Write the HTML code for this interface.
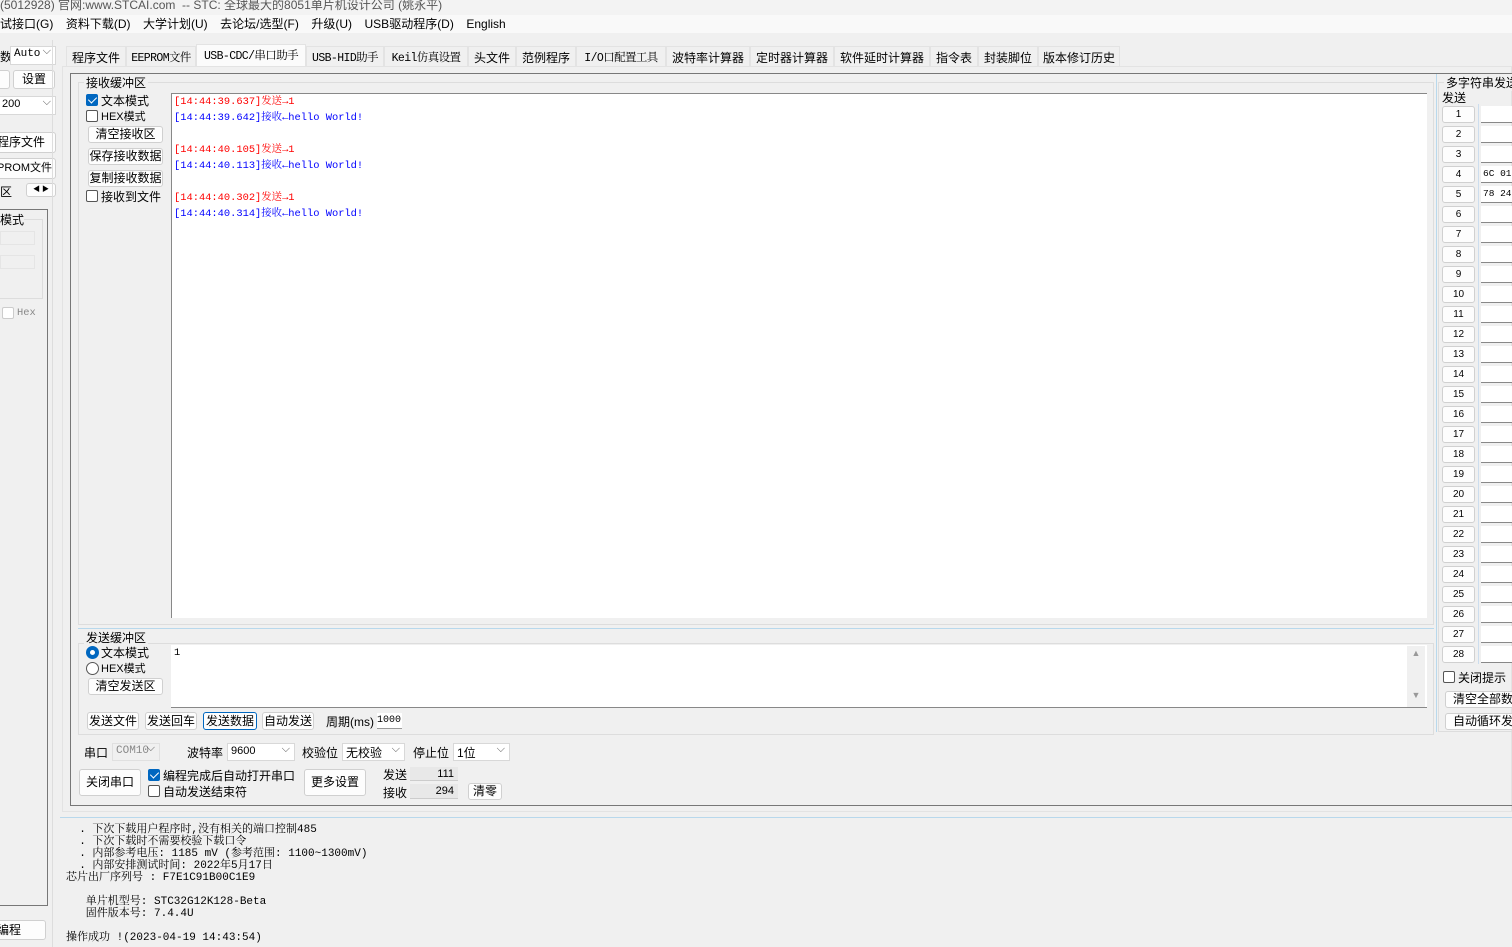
<!DOCTYPE html><html><head><meta charset="utf-8"><style>
*{box-sizing:border-box;margin:0;padding:0}
body{width:1512px;height:947px;background:#f0f0f0;font-family:"Liberation Sans","Noto Sans CJK SC",sans-serif;font-size:12px;color:#000;position:relative;overflow:hidden}
.a{position:absolute;white-space:nowrap}
.btn{position:absolute;background:#fdfdfd;border:1px solid #d0d0d0;border-radius:3px;text-align:center;white-space:nowrap}
.mono{font-family:"Liberation Mono","Noto Serif CJK SC",monospace;font-size:10.4px}
.cb{position:absolute;width:12px;height:12px;border:1px solid #555;border-radius:2px;background:#fff}
.cb.on{background:#0067c0;border-color:#0067c0}
.cb.on:after{content:"";position:absolute;left:3px;top:0px;width:4px;height:7px;border:solid #fff;border-width:0 1.5px 1.5px 0;transform:rotate(45deg)}
.rd{position:absolute;width:13px;height:13px;border:1px solid #555;border-radius:50%;background:#fff}
.rd.on{border:4px solid #0067c0}
.sel{position:absolute;background:#fff;border:1px solid #d8d8d8;height:18px;font-size:11px;padding:1px 3px}
.sel:after{content:"⌵";position:absolute;right:4px;top:-1px;color:#555;font-size:11px}
.tab{position:absolute;top:46px;height:21px;background:#f0f0f0;border:1px solid #e3e3e3;border-bottom:none;padding-top:2px;font-size:12px;text-align:center;overflow:hidden;white-space:nowrap}
.tab.m{font-family:"Liberation Mono","Noto Serif CJK SC",monospace;font-size:11.5px;padding-top:2px;letter-spacing:-0.6px}
.n{position:absolute;left:1442px;width:33px;height:17px;background:#fdfdfd;border:1px solid #d0d0d0;border-radius:3px;text-align:center;font-size:10px;line-height:15px;font-family:"Liberation Sans",sans-serif}
.in{position:absolute;left:1481px;width:31px;height:17px;background:#fff;border-bottom:1px solid #888;font-size:9.5px;line-height:15px;padding-left:2px;font-family:"Liberation Mono",monospace;overflow:hidden;white-space:nowrap}
</style></head><body>
<div class="a" style="left:0;top:0;width:1512px;height:15px;background:#f3f3f3;color:#555;font-size:12px;line-height:10px;">(5012928) 官网:www.STCAI.com &nbsp;-- STC: 全球最大的8051单片机设计公司 (姚永平)</div>
<div class="a" style="left:0;top:15px;width:1512px;height:18px;background:#f9f9f9;font-size:12px;line-height:18px">
<span>试接口(G)</span><span style="margin-left:12.5px">资料下载(D)</span><span style="margin-left:12.5px">大学计划(U)</span><span style="margin-left:12.5px">去论坛/选型(F)</span><span style="margin-left:12.5px">升级(U)</span><span style="margin-left:12.5px">USB驱动程序(D)</span><span style="margin-left:12.5px">English</span></div>
<!-- left panel -->
<div class="a" style="left:0;top:48px">数</div>
<div class="sel mono" style="left:10px;top:46px;width:46px;height:19px">Auto</div>
<div class="btn" style="left:-4px;top:70px;width:14px;height:19px"></div>
<div class="btn" style="left:13px;top:70px;width:42px;height:19px;line-height:17px">设置</div>
<div class="sel" style="left:-2px;top:96px;width:58px;height:19px">200</div>
<div class="btn" style="left:-4px;top:132px;width:60px;height:21px;text-align:left;line-height:19px">程序文件</div>
<div class="btn" style="left:-4px;top:158px;width:60px;height:21px;text-align:left;line-height:19px;font-size:11px">PROM文件</div>
<div class="a" style="left:0;top:183px">区</div>
<div class="btn" style="left:26px;top:183px;width:30px;height:14px;font-size:7px;line-height:12px">◀ ▶</div>
<div class="a" style="left:-2px;top:209px;width:50px;height:697px;border:1px solid #777;border-left:none"></div>
<div class="a" style="left:-2px;top:219px;width:45px;height:80px;border:1px solid #ddd"></div>
<div class="a" style="left:0;top:211px;background:#f0f0f0">模式</div>
<div class="a" style="left:0;top:231px;width:35px;height:14px;border:1px solid #e5e5e5"></div>
<div class="a" style="left:0;top:255px;width:35px;height:14px;border:1px solid #e5e5e5"></div>
<div class="cb" style="left:2px;top:307px;border-color:#ccc"></div>
<div class="a mono" style="left:17px;top:307px;color:#888">Hex</div>
<div class="a" style="left:52px;top:40px;width:1px;height:907px;background:#ddd"></div>
<div class="btn" style="left:-4px;top:920px;width:50px;height:20px;text-align:left;line-height:18px">编程</div>
<!-- tabs -->
<div class="tab" style="left:66px;width:60px">程序文件</div>
<div class="tab m" style="left:126px;width:70px">EEPROM文件</div>
<div class="tab m" style="left:196px;top:44px;height:23px;width:110px;background:#fbfbfb">USB-CDC/串口助手</div>
<div class="tab m" style="left:306px;width:78px">USB-HID助手</div>
<div class="tab m" style="left:384px;width:84px">Keil仿真设置</div>
<div class="tab" style="left:468px;width:48px">头文件</div>
<div class="tab" style="left:516px;width:60px">范例程序</div>
<div class="tab m" style="left:576px;width:90px">I/O口配置工具</div>
<div class="tab" style="left:666px;width:84px">波特率计算器</div>
<div class="tab" style="left:750px;width:84px">定时器计算器</div>
<div class="tab" style="left:834px;width:96px">软件延时计算器</div>
<div class="tab" style="left:930px;width:48px">指令表</div>
<div class="tab" style="left:978px;width:60px">封装脚位</div>
<div class="tab" style="left:1038px;width:82px">版本修订历史</div>
<div class="a" style="left:62px;top:66px;width:1450px;height:746px;border:1px solid #e3e3e3;background:#f0f0f0"></div>
<div class="a" style="left:70px;top:73px;width:1442px;height:733px;border-top:1px solid #777;border-left:1px solid #777;border-bottom:1px solid #777"></div>
<!-- receive group -->
<div class="a" style="left:78px;top:82px;width:1356px;height:543px;border:1px solid #ddd"></div>
<div class="a" style="left:84px;top:74px;background:#f0f0f0;padding:0 2px">接收缓冲区</div>
<div class="cb on" style="left:86px;top:94px"></div><div class="a" style="left:101px;top:92px">文本模式</div>
<div class="cb" style="left:86px;top:110px"></div><div class="a" style="left:101px;top:108px;font-size:11px">HEX模式</div>
<div class="btn" style="left:88px;top:126px;width:75px;height:17px;line-height:15px">清空接收区</div>
<div class="btn" style="left:88px;top:148px;width:75px;height:17px;line-height:15px">保存接收数据</div>
<div class="btn" style="left:88px;top:170px;width:75px;height:17px;line-height:15px">复制接收数据</div>
<div class="cb" style="left:86px;top:190px"></div><div class="a" style="left:101px;top:188px">接收到文件</div>
<div class="a mono" style="left:171px;top:93px;width:1256px;height:525px;background:#fff;border-top:1px solid #888;border-left:1px solid #888;line-height:16px;padding:0 0 0 2px">
<div style="color:#f00">[14:44:39.637]发送→1</div><div style="color:#00f">[14:44:39.642]接收←hello World!</div><br>
<div style="color:#f00">[14:44:40.105]发送→1</div><div style="color:#00f">[14:44:40.113]接收←hello World!</div><br>
<div style="color:#f00">[14:44:40.302]发送→1</div><div style="color:#00f">[14:44:40.314]接收←hello World!</div></div>
<div class="a" style="left:78px;top:628px;width:1356px;height:1px;background:#b8d8ec"></div>
<!-- send group -->
<div class="a" style="left:78px;top:643px;width:1356px;height:92px;border:1px solid #ddd"></div>
<div class="a" style="left:84px;top:629px;background:#f0f0f0;padding:0 2px">发送缓冲区</div>
<div class="rd on" style="left:86px;top:646px"></div><div class="a" style="left:101px;top:644px">文本模式</div>
<div class="rd" style="left:86px;top:662px"></div><div class="a" style="left:101px;top:660px;font-size:11px">HEX模式</div>
<div class="btn" style="left:88px;top:678px;width:75px;height:17px;line-height:15px">清空发送区</div>
<div class="a mono" style="left:171px;top:645px;width:1256px;height:63px;background:#fff;border-bottom:1px solid #888;padding:2px 3px">1</div>
<div class="a" style="left:1407px;top:646px;width:18px;height:61px;background:#f0f0f0;color:#999;font-size:9px;text-align:center;line-height:14px">▲<br><br><br>▼</div>
<div class="btn" style="left:87px;top:712px;width:52px;height:18px;line-height:16px">发送文件</div>
<div class="btn" style="left:145px;top:712px;width:52px;height:18px;line-height:16px">发送回车</div>
<div class="btn" style="left:203px;top:712px;width:54px;height:18px;line-height:16px;border:1px solid #0067c0">发送数据</div>
<div class="btn" style="left:262px;top:712px;width:52px;height:18px;line-height:16px">自动发送</div>
<div class="a" style="left:326px;top:713px">周期(ms)</div>
<div class="a mono" style="left:377px;top:713px;width:25px;height:16px;background:#fff;border-bottom:1px solid #999;font-size:10px;line-height:15px;overflow:hidden">1000</div>
<!-- serial settings -->
<div class="a" style="left:84px;top:744px">串口</div>
<div class="sel mono" style="left:112px;top:743px;width:48px;color:#888;background:#f0f0f0;border-color:#e0e0e0">COM10</div>
<div class="a" style="left:187px;top:744px">波特率</div>
<div class="sel" style="left:227px;top:743px;width:68px">9600</div>
<div class="a" style="left:302px;top:744px">校验位</div>
<div class="sel" style="left:342px;top:743px;width:63px;font-size:12px;padding:0 3px">无校验</div>
<div class="a" style="left:413px;top:744px">停止位</div>
<div class="sel" style="left:453px;top:743px;width:57px;font-size:12px;padding:0 3px">1位</div>
<div class="btn" style="left:79px;top:769px;width:62px;height:27px;line-height:25px">关闭串口</div>
<div class="cb on" style="left:148px;top:769px"></div><div class="a" style="left:163px;top:767px">编程完成后自动打开串口</div>
<div class="cb" style="left:148px;top:785px"></div><div class="a" style="left:163px;top:783px">自动发送结束符</div>
<div class="btn" style="left:304px;top:769px;width:62px;height:27px;line-height:25px">更多设置</div>
<div class="a" style="left:383px;top:766px">发送</div>
<div class="a" style="left:410px;top:767px;width:48px;height:14px;background:#e8e8e8;border-bottom:1px solid #ccc;text-align:right;font-size:11px;padding-right:4px;line-height:14px">111</div>
<div class="a" style="left:383px;top:784px">接收</div>
<div class="a" style="left:410px;top:784px;width:48px;height:15px;background:#e8e8e8;border-bottom:1px solid #ccc;text-align:right;font-size:11px;padding-right:4px;line-height:15px">294</div>
<div class="btn" style="left:468px;top:783px;width:34px;height:17px;line-height:15px">清零</div>
<!-- right panel -->
<div class="a" style="left:1436px;top:74px;width:1px;height:658px;background:#b8d8ec"></div>
<div class="a" style="left:1438px;top:82px;width:80px;height:650px;border:1px solid #ddd"></div>
<div class="a" style="left:1444px;top:74px;background:#f0f0f0;padding:0 2px">多字符串发送</div>
<div class="a" style="left:1442px;top:89px">发送</div>
<div class="a" style="left:1478px;top:104px;width:1px;height:560px;background:#cde"></div>
<div class="n" style="top:106px">1</div><div class="in" style="top:106px"></div>
<div class="n" style="top:126px">2</div><div class="in" style="top:126px"></div>
<div class="n" style="top:146px">3</div><div class="in" style="top:146px"></div>
<div class="n" style="top:166px">4</div><div class="in" style="top:166px">6C 01</div>
<div class="n" style="top:186px">5</div><div class="in" style="top:186px">78 24</div>
<div class="n" style="top:206px">6</div><div class="in" style="top:206px"></div>
<div class="n" style="top:226px">7</div><div class="in" style="top:226px"></div>
<div class="n" style="top:246px">8</div><div class="in" style="top:246px"></div>
<div class="n" style="top:266px">9</div><div class="in" style="top:266px"></div>
<div class="n" style="top:286px">10</div><div class="in" style="top:286px"></div>
<div class="n" style="top:306px">11</div><div class="in" style="top:306px"></div>
<div class="n" style="top:326px">12</div><div class="in" style="top:326px"></div>
<div class="n" style="top:346px">13</div><div class="in" style="top:346px"></div>
<div class="n" style="top:366px">14</div><div class="in" style="top:366px"></div>
<div class="n" style="top:386px">15</div><div class="in" style="top:386px"></div>
<div class="n" style="top:406px">16</div><div class="in" style="top:406px"></div>
<div class="n" style="top:426px">17</div><div class="in" style="top:426px"></div>
<div class="n" style="top:446px">18</div><div class="in" style="top:446px"></div>
<div class="n" style="top:466px">19</div><div class="in" style="top:466px"></div>
<div class="n" style="top:486px">20</div><div class="in" style="top:486px"></div>
<div class="n" style="top:506px">21</div><div class="in" style="top:506px"></div>
<div class="n" style="top:526px">22</div><div class="in" style="top:526px"></div>
<div class="n" style="top:546px">23</div><div class="in" style="top:546px"></div>
<div class="n" style="top:566px">24</div><div class="in" style="top:566px"></div>
<div class="n" style="top:586px">25</div><div class="in" style="top:586px"></div>
<div class="n" style="top:606px">26</div><div class="in" style="top:606px"></div>
<div class="n" style="top:626px">27</div><div class="in" style="top:626px"></div>
<div class="n" style="top:646px">28</div><div class="in" style="top:646px"></div>
<div class="cb" style="left:1443px;top:671px"></div><div class="a" style="left:1458px;top:669px">关闭提示</div>
<div class="btn" style="left:1445px;top:691px;width:80px;height:17px;line-height:15px;text-align:left;padding-left:7px">清空全部数据</div>
<div class="btn" style="left:1445px;top:713px;width:80px;height:17px;line-height:15px;text-align:left;padding-left:7px">自动循环发送</div>
<!-- log -->
<div class="a" style="left:60px;top:817px;width:1452px;height:1px;background:#b8d8ec"></div>
<div class="a" style="left:62px;top:820px;width:1450px;height:127px;background:#f0f0f0;font-family:'Liberation Mono','Noto Serif CJK SC',monospace;font-size:11px;line-height:12px;padding:4px 0 0 4px;white-space:pre">  . 下次下载用户程序时,没有相关的端口控制485
  . 下次下载时不需要校验下载口令
  . 内部参考电压: 1185 mV (参考范围: 1100~1300mV)
  . 内部安排测试时间: 2022年5月17日
芯片出厂序列号 : F7E1C91B00C1E9

   单片机型号: STC32G12K128-Beta
   固件版本号: 7.4.4U

操作成功 !(2023-04-19 14:43:54)</div>
</body></html>
